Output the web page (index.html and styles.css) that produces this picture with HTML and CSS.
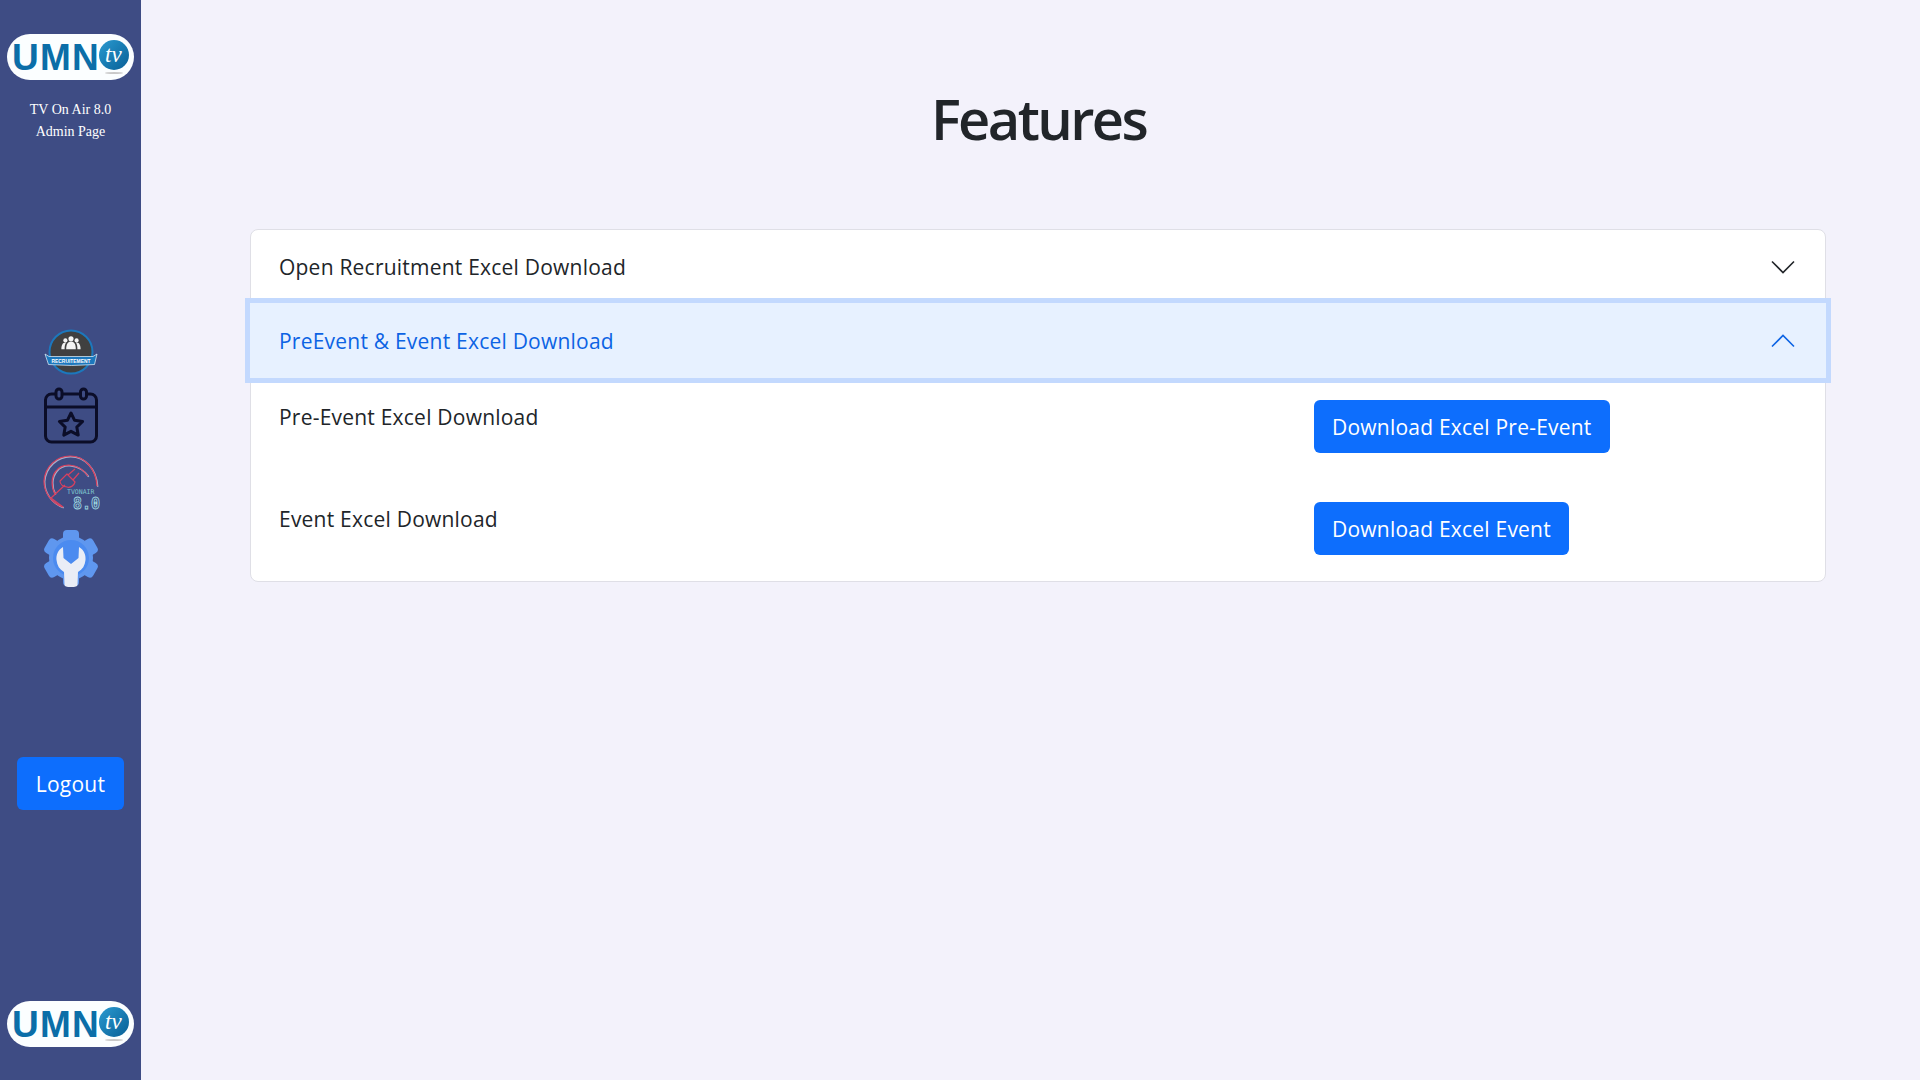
FILE: index.html
```html
<!DOCTYPE html>
<html lang="en">
<head>
<meta charset="utf-8">
<title>Features</title>
<link rel="stylesheet" href="styles.css">
</head>
<body>
<div class="app">
  <aside class="sidebar">
    <svg class="logo logo-top" viewBox="0 0 127 46" width="127" height="46">
      <defs>
        <linearGradient id="tvg" x1="0" y1="0" x2="1" y2="1"><stop offset="0" stop-color="#2a9ad0"/><stop offset="1" stop-color="#075f96"/></linearGradient>
      </defs>
      <rect width="127" height="46" rx="23" fill="#fbfeff"/>
      <text class="logo-word" x="5" y="36" textLength="87" lengthAdjust="spacing">UMN</text>
      <circle cx="107" cy="21" r="15" fill="url(#tvg)"/>
      <text class="logo-tv" x="98" y="28">tv</text>
      <ellipse cx="107" cy="39" rx="9" ry="1" fill="#c9c9c9"/>
    </svg>
    <p class="sidebar-title">TV On Air 8.0<br>Admin Page</p>
    <nav class="side-nav">
      <svg class="nav-icon" width="54" height="46" viewBox="0 0 54 46">
        <circle cx="27" cy="23" r="21.500" fill="#404040" stroke="#1c78bd" stroke-width="2"/>
        <g fill="#f4f4f4" transform="translate(27 17) scale(.8) translate(-27 -17)">
          <circle cx="27" cy="8" r="3.200"/><path d="M21 21c0-6 2-9.500 6-9.500s6 3.500 6 9.500z"/>
          <circle cx="20" cy="10" r="2.600"/><path d="M15 21c0-5 1.500-8.500 5-8.500 .8 0 1 .2 1 .2-1.500 2-2 4-2 8.300z"/>
          <circle cx="34" cy="10" r="2.600"/><path d="M39 21c0-5-1.500-8.500-5-8.500-.8 0-1 .2-1 .2 1.500 2 2 4 2 8.300z"/>
        </g>
        <path d="M1 25l4 2.500h44l4-2.500-2.500 10.500q-23 2-46 0z" fill="#1c78bd" stroke="#e8f3fb" stroke-width=".7"/>
        <text class="badge-text" x="7.500" y="34" textLength="39" lengthAdjust="spacingAndGlyphs">RECRUITEMENT</text>
      </svg>
      <svg class="nav-icon icon-cal" width="56" height="57" viewBox="0 0 56 57" fill="none" stroke="#0b0d28" stroke-width="3" stroke-linejoin="round">
        <rect x="2.500" y="7" width="51" height="48" rx="6"/>
        <path d="M2.500 20h51"/>
        <rect x="13" y="2" width="6" height="10" rx="3" fill="#3e4c84"/>
        <rect x="37.500" y="2" width="6" height="10" rx="3" fill="#3e4c84"/>
        <path d="M28 26l3.600 7.300 8 1.200-5.800 5.600 1.400 8-7.200-3.800-7.200 3.800 1.400-8-5.800-5.600 8-1.200z"/>
      </svg>
      <svg class="nav-icon icon-plug" width="58" height="58" viewBox="0 0 58 58" fill="none">
        <g stroke="#f0eef6" stroke-opacity=".6" stroke-width="1.500" transform="translate(.7 .7)">
          <path d="M21 53C9 49 2 38 2 27 3 12 15 2 28 2c14 0 26 12 27 30"/>
          <path d="M13 40C9 33 9 23 14 17c6-8 22-9 32 5"/>
        </g>
        <g stroke="#d8415f" stroke-width="1.200" stroke-linejoin="round">
          <path d="M21 53C9 49 2 38 2 27 3 12 15 2 28 2c14 0 26 12 27 30"/>
          <path d="M13 40C9 33 9 23 14 17c6-8 22-9 32 5"/>
          <path d="M21 53L9 44l14-13"/>
          <path d="M18 27l7-7 8 8c-1 4-5 6-8 5-4-.5-7-3-7-6z"/>
          <path d="M26 21l7-6M31 26l6-7"/>
        </g>
        <text class="plug-name" x="25" y="40">TVONAIR</text>
        <text class="plug-ver" x="31" y="55">8.0</text>
      </svg>
      <svg class="nav-icon icon-gear" width="56" height="58" viewBox="0 0 56 58">
        <g transform="translate(28 28)" fill="#5f97ef">
          <circle r="22"/>
          <rect x="-8" y="-28" width="16" height="14" rx="4"/>
          <rect x="-8" y="-28" width="16" height="14" rx="4" transform="rotate(60)"/>
          <rect x="-8" y="-28" width="16" height="14" rx="4" transform="rotate(120)"/>
          <rect x="-8" y="-28" width="16" height="14" rx="4" transform="rotate(180)"/>
          <rect x="-8" y="-28" width="16" height="14" rx="4" transform="rotate(240)"/>
          <rect x="-8" y="-28" width="16" height="14" rx="4" transform="rotate(300)"/>
          <circle r="18" fill="#4b8bf0"/>
        </g>
        <path d="M20 17C15 20 13 25 13.500 30c.5 5.500 3 9.500 7.500 12l.5 12.500c.2 2 2 2.500 6.500 2.500s6.300-.5 6.500-2.500L35 42c4.500-2.500 7-6.500 7.500-12 .5-5-1.500-10-6.500-13l-.5 11L28 34l-7.500-6z" fill="#e9edf6"/>
      </svg>
    </nav>
    <button class="btn btn-logout" type="button">Logout</button>
    <svg class="logo logo-bottom" viewBox="0 0 127 46" width="127" height="46">
      <rect width="127" height="46" rx="23" fill="#fbfeff"/>
      <text class="logo-word" x="5" y="36" textLength="87" lengthAdjust="spacing">UMN</text>
      <circle cx="107" cy="21" r="15" fill="url(#tvg)"/>
      <text class="logo-tv" x="98" y="28">tv</text>
      <ellipse cx="107" cy="39" rx="9" ry="1" fill="#c9c9c9"/>
    </svg>
  </aside>
  <main class="content">
    <h1 class="page-title">Features</h1>
    <section class="accordion">
      <div class="acc-header">
        <span>Open Recruitment Excel Download</span>
        <svg class="chev" width="24" height="14" viewBox="0 0 24 14" fill="none" stroke="#212529" stroke-width="1.600"><path d="M1 1.500l11 11 11-11"/></svg>
      </div>
      <div class="acc-header acc-open">
        <span>PreEvent &amp; Event Excel Download</span>
        <svg class="chev" width="24" height="14" viewBox="0 0 24 14" fill="none" stroke="#0c63e4" stroke-width="1.600"><path d="M1 12.500l11-11 11 11"/></svg>
      </div>
      <div class="acc-body">
        <div class="acc-row">
          <span class="acc-label">Pre-Event Excel Download</span>
          <div><button class="btn" type="button">Download Excel Pre-Event</button></div>
        </div>
        <div class="acc-row">
          <span class="acc-label">Event Excel Download</span>
          <div><button class="btn" type="button">Download Excel Event</button></div>
        </div>
      </div>
    </section>
  </main>
</div>
</body>
</html>
```
FILE: styles.css
```css
* { box-sizing: border-box; }
html, body { margin: 0; height: 100%; }
body {
  background: #f3f2fb;
  color: #212529;
  font-family: "Open Sans", "Noto Sans", sans-serif;
  font-size: 21px;
  letter-spacing: 0.22px;
}
.app { display: flex; height: 1080px; overflow: hidden; }
.sidebar {
  width: 141px;
  flex: none;
  background: #3e4c84;
  display: flex;
  flex-direction: column;
  align-items: center;
  padding: 34px 0 33px;
}
.logo { display: block; flex: none; }
.logo-word { font-family: "Liberation Sans", sans-serif; font-size: 37px; font-weight: 700; fill: #0b6ea8; }
.logo-tv { font-family: "Liberation Serif", serif; font-style: italic; font-size: 23px; fill: #fff; letter-spacing: 0; }
.sidebar-title {
  margin: 19px 0 0;
  color: #fff;
  font-family: "Liberation Serif", serif;
  font-size: 14px;
  line-height: 22px;
  letter-spacing: 0;
  text-align: center;
}
.side-nav { display: flex; flex-direction: column; align-items: center; margin-top: 186px; }
.nav-icon { display: block; flex: none; }
.icon-cal { margin-top: 12px; }
.icon-plug { margin-top: 10px; }
.icon-gear { margin-top: 18px; }
.badge-text { font-family: "Liberation Sans", sans-serif; font-size: 5.500px; font-weight: 700; fill: #fff; letter-spacing: 0; }
.plug-name { font-family: "DejaVu Sans Mono", monospace; font-size: 6.500px; fill: #7fc7cf; letter-spacing: 0; }
.plug-ver { font-family: "DejaVu Sans Mono", monospace; font-size: 15px; font-weight: 700; fill: #3e4c84; stroke: #9fd8e0; stroke-width: .8px; letter-spacing: 0; }
.btn {
  height: 53px;
  padding: 0 18px;
  border: 0;
  border-radius: 6px;
  background: #0d6efd;
  color: #fff;
  font: inherit;
  letter-spacing: inherit;
  white-space: nowrap;
}
.btn-logout { margin-top: 169px; padding: 0 19px; flex: none; }
.logo-bottom { margin-top: auto; }
.content { flex: 1; padding: 85px 94px 0 109px; }
.page-title {
  margin: 0 0 77px;
  padding-left: 1px;
  font-size: 56px;
  line-height: 67px;
  font-weight: 600;
  letter-spacing: -2.600px;
  text-align: center;
}
.accordion {
  height: 353px;
  background: #fff;
  border: 1px solid #dfdfe6;
  border-radius: 8px;
}
.acc-header {
  height: 73px;
  padding: 0 30px 0 28px;
  display: flex;
  align-items: center;
  justify-content: space-between;
}
.acc-open {
  height: 75px;
  margin: 0 -1px;
  padding: 0 31px 0 29px;
  background: #e7f1ff;
  color: #0c63e4;
  box-shadow: 0 0 0 5px #c3d9fe;
}
.acc-body { padding: 22px 28px 0; }
.acc-row { display: grid; grid-template-columns: 1035px 1fr; height: 102px; }
.acc-row .acc-label { line-height: 34px; }
```
